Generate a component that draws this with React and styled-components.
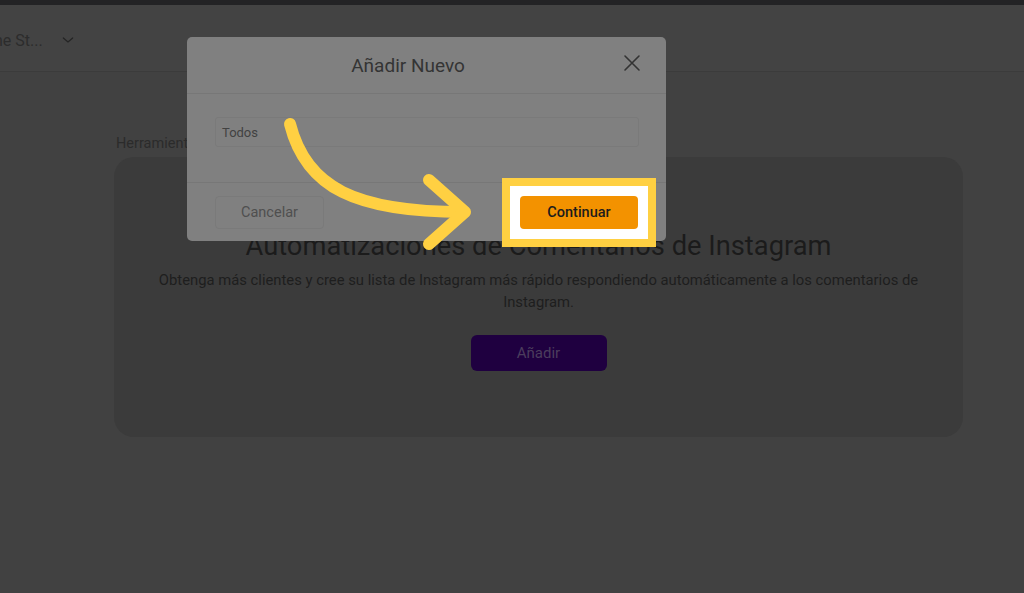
import React from "react";
import styled, { createGlobalStyle } from "styled-components";

const Global = createGlobalStyle`
  html, body { margin: 0; padding: 0; }
  body {
    width: 1024px;
    height: 593px;
    overflow: hidden;
    background: #414141;
    font-family: Roboto, "Noto Sans", "Liberation Sans", sans-serif;
  }
`;

const Page = styled.div`
  position: relative;
  width: 1024px;
  height: 593px;
  display: flex;
  flex-direction: column;
  background: #414141;
  overflow: hidden;
`;

const TopStrip = styled.div`
  height: 5px;
  background: #232325;
`;

const Header = styled.header`
  height: 67px;
  display: flex;
  align-items: center;
  background: #434343;
  border-bottom: 1px solid #3b3b3b;
  box-sizing: border-box;
  padding-top: 4px;
`;

const Account = styled.div`
  display: flex;
  align-items: center;
  gap: 17px;
  margin-left: -6px;
  color: #2c2c2c;
  font-size: 16px;
`;

const Main = styled.main`
  flex: 1;
  display: flex;
  flex-direction: column;
  padding: 64px 61px 0 114px;
`;

const Breadcrumb = styled.div`
  color: #2b2b2b;
  font-size: 14.5px;
  line-height: 16px;
  margin-left: 2px;
  margin-bottom: 5px;
`;

const Card = styled.section`
  width: 849px;
  height: 280px;
  box-sizing: border-box;
  background: #3b3b3b;
  border-radius: 20px;
  display: flex;
  flex-direction: column;
  align-items: center;
  padding: 73px 30px 0;
`;

const CardTitle = styled.h1`
  margin: 0;
  font-size: 27.3px;
  font-weight: 400;
  line-height: 32px;
  color: #1b1b1b;
`;

const CardText = styled.p`
  margin: 7px 0 0;
  max-width: 800px;
  text-align: center;
  font-size: 14.8px;
  line-height: 22px;
  color: #1e1e1e;
`;

const AddButton = styled.button`
  margin-top: 22px;
  width: 136px;
  height: 36px;
  border: none;
  border-radius: 6px;
  background: #1f0040;
  color: #4b3d5d;
  font-family: inherit;
  font-size: 15px;
`;

const Modal = styled.div`
  position: absolute;
  left: 187px;
  top: 37px;
  width: 479px;
  height: 204px;
  background: #808080;
  border-radius: 5px;
  display: flex;
  flex-direction: column;
`;

const ModalHeader = styled.div`
  height: 57px;
  box-sizing: border-box;
  display: flex;
  align-items: center;
  gap: 9px;
  padding: 0 24px 0 16px;
  border-bottom: 1px solid #777777;
`;

const ModalTitle = styled.h2`
  flex: 1;
  margin: 0;
  text-align: center;
  font-size: 19px;
  font-weight: 400;
  color: #343434;
`;

const CloseButton = styled.button`
  width: 20px;
  height: 20px;
  padding: 0;
  border: none;
  background: transparent;
  display: flex;
  align-items: center;
  justify-content: center;
  margin-top: -4px;
`;

const ModalBody = styled.div`
  height: 89px;
  box-sizing: border-box;
  padding: 23px 27px 0 28px;
  border-bottom: 1px solid #777777;
`;

const Input = styled.div`
  height: 30px;
  box-sizing: border-box;
  border: 1px solid #7a7a7a;
  border-radius: 3px;
  display: flex;
  align-items: center;
  padding-left: 6px;
  font-size: 13px;
  color: #424242;
`;

const ModalFooter = styled.div`
  flex: 1;
  display: flex;
  align-items: flex-start;
  justify-content: space-between;
  padding: 13px 28px 0 28px;
`;

const CancelButton = styled.button`
  width: 109px;
  height: 33px;
  border: 1px solid #7a7a7a;
  border-radius: 4px;
  background: #808080;
  color: #4f4f4f;
  font-family: inherit;
  font-size: 14.5px;
`;

const Highlight = styled.div`
  margin: -18px;
  padding: 10px;
  border: 8px solid #ffd042;
  background: #ffffff;
  display: flex;
`;

const ContinueButton = styled.button`
  width: 118px;
  height: 33px;
  border: none;
  border-radius: 4px;
  background: #f39200;
  color: #1c1c1c;
  font-family: inherit;
  font-size: 14.5px;
  font-weight: 500;
`;

const Annotation = styled.svg`
  position: absolute;
  left: 0;
  top: 0;
  pointer-events: none;
`;

export default function App() {
  return (
    <>
      <Global />
      <Page>
        <TopStrip />
        <Header>
          <Account>
            <span>ne St...</span>
            <svg width="16" height="16" viewBox="0 0 24 24" fill="none" stroke="#242424" strokeWidth="1.8" strokeLinecap="round" strokeLinejoin="round">
              <path d="M5 9l7 6 7-6" />
            </svg>
          </Account>
        </Header>
        <Main>
          <Breadcrumb>Herramientas</Breadcrumb>
          <Card>
            <CardTitle>Automatizaciones de Comentarios de Instagram</CardTitle>
            <CardText>
              Obtenga más clientes y cree su lista de Instagram más rápido respondiendo automáticamente a los comentarios de Instagram.
            </CardText>
            <AddButton>Añadir</AddButton>
          </Card>
        </Main>

        <Modal>
          <ModalHeader>
            <ModalTitle>Añadir Nuevo</ModalTitle>
            <CloseButton aria-label="Cerrar">
              <svg width="18" height="18" viewBox="0 0 18 18" fill="none" stroke="#333" strokeWidth="1.6" strokeLinecap="round">
                <path d="M2 2l14 14M16 2L2 16" />
              </svg>
            </CloseButton>
          </ModalHeader>
          <ModalBody>
            <Input>Todos</Input>
          </ModalBody>
          <ModalFooter>
            <CancelButton>Cancelar</CancelButton>
            <Highlight>
              <ContinueButton>Continuar</ContinueButton>
            </Highlight>
          </ModalFooter>
        </Modal>

        <Annotation width="1024" height="593" viewBox="0 0 1024 593">
          <g fill="none" stroke="#ffd042" strokeWidth="12" strokeLinecap="round" strokeLinejoin="round">
            <path d="M290 124 C306 188 356 212 464 212" />
            <path d="M429 180 L465 212 L429 244" />
          </g>
        </Annotation>
      </Page>
    </>
  );
}
